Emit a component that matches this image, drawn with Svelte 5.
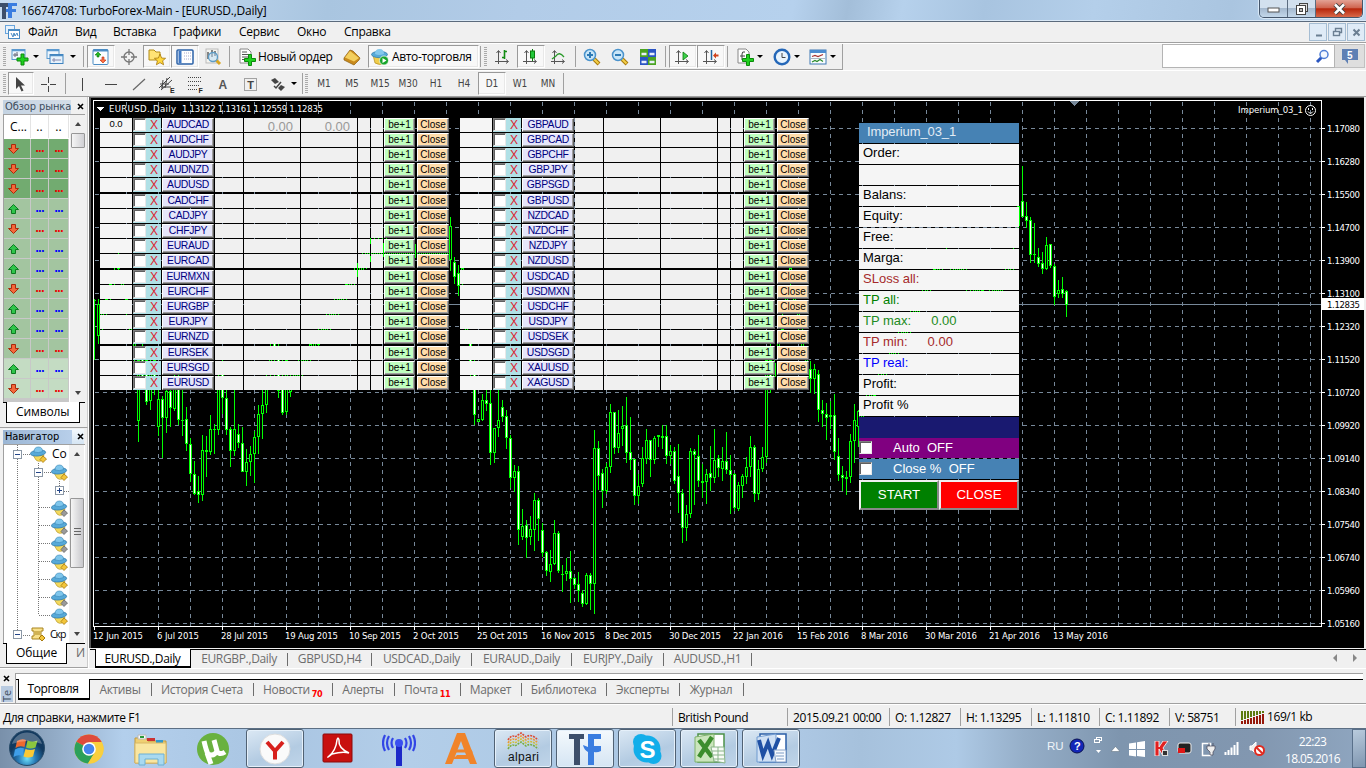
<script lang="ts">
  type Candle = [number, number, number, number, number, number];
  type Tool = { k: string; w: number; on?: boolean; t?: string };

  const menu: [string, number][] = [
    ['Файл', 47], ['Вид', 38], ['Вставка', 60], ['Графики', 66], ['Сервис', 58], ['Окно', 47], ['Справка', 60],
  ];

  const tools: Tool[] = [
    { k: 'grip', w: 8 }, { k: 'new', w: 23 }, { k: 'arr', w: 9 }, { k: 'profiles', w: 29 }, { k: 'arr', w: 7 },
    { k: 'gap', w: 3 }, { k: 'sep', w: 8 }, { k: 'market', w: 28, on: true }, { k: 'target', w: 28 },
    { k: 'star', w: 28, on: true }, { k: 'list', w: 28, on: true }, { k: 'tester', w: 28 }, { k: 'sep', w: 5 },
    { k: 'gap', w: 6 }, { k: 'order', w: 18 }, { k: 'text', w: 82, t: 'Новый ордер' }, { k: 'gold', w: 28 },
    { k: 'gap', w: 2 }, { k: 'auto', w: 111, on: true, t: 'Авто-торговля' }, { k: 'sep', w: 2 }, { k: 'grip', w: 8 },
    { k: 'bars', w: 28 }, { k: 'candle', w: 28, on: true }, { k: 'line', w: 28 }, { k: 'sep', w: 5 },
    { k: 'zoomin', w: 28 }, { k: 'zoomout', w: 28 }, { k: 'tile', w: 28 }, { k: 'sep', w: 7 },
    { k: 'scroll', w: 28, on: true }, { k: 'shift', w: 28, on: true }, { k: 'sep', w: 5 }, { k: 'gap', w: 4 },
    { k: 'indicator', w: 22 }, { k: 'arr', w: 7 }, { k: 'gap', w: 7 }, { k: 'clock', w: 23 }, { k: 'arr', w: 7 },
    { k: 'gap', w: 7 }, { k: 'template', w: 22 }, { k: 'arr', w: 8 }, { k: 'gap', w: 5 },
  ];

  const drawTools: Tool[] = [
    { k: 'grip', w: 8 }, { k: 'cursor', w: 26, on: true }, { k: 'cross', w: 29 }, { k: 'sep', w: 5 },
    { k: 'vline', w: 29 }, { k: 'hline', w: 28 }, { k: 'diag', w: 28 }, { k: 'channel', w: 28 }, { k: 'fibo', w: 28 },
    { k: 'letter', w: 28 }, { k: 'label', w: 28 }, { k: 'arrows', w: 25 }, { k: 'arr', w: 7 }, { k: 'gap', w: 4 },
    { k: 'sep', w: 2 }, { k: 'grip', w: 7 },
    ...['M1', 'M5', 'M15', 'M30', 'H1', 'H4', 'D1', 'W1', 'MN'].map((t) => ({ k: 'period', w: 28, t, on: t === 'D1' })),
    { k: 'sep', w: 3 },
  ];

  // 1 = price went up, 0 = price went down
  const market = [0, 0, 0, 1, 0, 1, 1, 0, 1, 1, 0, 1, 0];
  const navIcons = ['grey', 'grey', 'grey', 'yellow', 'yellow', 'grey', 'yellow'];

  const leftPairs = 'AUDCAD AUDCHF AUDJPY AUDNZD AUDUSD CADCHF CADJPY CHFJPY EURAUD EURCAD EURMXN EURCHF EURGBP EURJPY EURNZD EURSEK EURSGD EURUSD'.split(' ');
  const rightPairs = 'GBPAUD GBPCAD GBPCHF GBPJPY GBPSGD GBPUSD NZDCAD NZDCHF NZDJPY NZDUSD USDCAD USDMXN USDCHF USDJPY USDSEK USDSGD XAUUSD XAGUSD'.split(' ');

  const panelRows = [
    ['Order:', ''], ['', ''], ['Balans:', ''], ['Equity:', ''], ['Free:', ''], ['Marga:', ''],
    ['SLoss all:', 'brown'], ['TP all:', 'green'], ['TP max:', 'forest', '0.00'], ['TP min:', 'brown', '0.00'],
    ['TP real:', 'blue'], ['Profit:', ''], ['Profit %', ''],
  ];

  const prices = ['1.17080', '1.16280', '1.15500', '1.14700', '1.13900', '1.13100', '1.12320', '1.11520', '1.10720', '1.09920', '1.09140', '1.08340', '1.07540', '1.06740', '1.05960', '1.05160'];
  const dates: [string, number][] = [
    ['12 Jun 2015', 50], ['6 Jul 2015', 42], ['28 Jul 2015', 47], ['19 Aug 2015', 53], ['10 Sep 2015', 52], ['2 Oct 2015', 46],
    ['25 Oct 2015', 51], ['16 Nov 2015', 54], ['8 Dec 2015', 47], ['30 Dec 2015', 52], ['22 Jan 2016', 50], ['15 Feb 2016', 52],
    ['8 Mar 2016', 47], ['30 Mar 2016', 52], ['21 Apr 2016', 51], ['13 May 2016', 55],
  ];

  // x, high, low, body top, body bottom, up
  const bars: Candle[] = [
    [94, 299, 360, 300, 301, 1], [98, 299, 344, 304, 336, 1], [138, 350, 442, 360, 421, 1], [142, 340, 388, 350, 380, 0],
    [146, 350, 405, 360, 402, 0], [150, 350, 410, 370, 401, 1], [154, 350, 395, 360, 380, 0], [158, 380, 436, 399, 427, 1],
    [162, 396, 458, 399, 418, 0], [166, 388, 433, 391, 418, 1], [170, 380, 427, 391, 408, 0], [174, 370, 411, 380, 409, 1],
    [178, 370, 425, 380, 420, 0], [182, 388, 436, 420, 421, 0], [186, 407, 451, 419, 444, 0], [190, 438, 482, 444, 474, 0],
    [194, 461, 495, 474, 494, 0], [198, 476, 503, 491, 495, 0], [202, 435, 501, 450, 495, 1], [206, 436, 477, 450, 452, 0],
    [210, 415, 455, 429, 452, 1], [214, 424, 454, 429, 430, 0], [218, 370, 435, 380, 430, 1], [222, 360, 414, 370, 398, 0],
    [226, 390, 435, 398, 430, 0], [230, 427, 467, 429, 451, 0], [234, 386, 456, 429, 451, 1], [238, 424, 448, 434, 443, 0],
    [242, 427, 472, 443, 472, 0], [246, 449, 486, 462, 472, 1], [250, 446, 476, 454, 462, 1], [254, 431, 483, 437, 454, 1],
    [258, 405, 454, 414, 437, 1], [262, 386, 439, 405, 414, 1], [266, 370, 413, 380, 405, 1], [270, 340, 386, 350, 370, 1],
    [274, 330, 386, 340, 360, 0], [278, 340, 398, 350, 391, 0], [282, 360, 415, 380, 413, 0], [286, 350, 415, 360, 412, 1],
    [450, 217, 271, 226, 260, 1], [454, 257, 284, 262, 277, 0], [458, 265, 296, 273, 286, 0],
    [470, 330, 386, 340, 370, 0], [474, 350, 425, 370, 415, 0], [478, 419, 422, 419, 422, 1], [482, 394, 421, 400, 420, 1],
    [486, 380, 411, 400, 404, 0], [490, 380, 465, 403, 453, 0], [494, 428, 463, 428, 453, 1], [498, 380, 437, 420, 428, 1],
    [502, 400, 422, 407, 417, 0], [506, 410, 449, 416, 438, 0], [510, 435, 488, 438, 478, 0], [514, 465, 492, 471, 478, 1],
    [518, 466, 545, 471, 530, 0], [522, 509, 540, 526, 537, 1], [526, 520, 558, 525, 538, 0], [530, 516, 545, 529, 537, 1],
    [534, 493, 551, 500, 530, 1], [538, 498, 541, 500, 519, 0], [542, 523, 557, 530, 553, 0], [546, 551, 576, 552, 571, 0],
    [550, 550, 582, 564, 572, 1], [554, 520, 565, 533, 564, 1], [558, 531, 573, 533, 571, 0], [562, 565, 592, 574, 575, 0],
    [566, 558, 581, 571, 574, 1], [570, 551, 603, 571, 579, 0], [574, 577, 589, 578, 585, 0], [578, 572, 602, 584, 591, 0],
    [582, 590, 607, 593, 604, 0], [586, 573, 605, 575, 604, 1], [590, 573, 610, 575, 584, 0], [594, 430, 614, 448, 584, 1],
    [598, 441, 490, 448, 476, 0], [602, 469, 508, 473, 491, 0], [606, 463, 494, 467, 491, 1], [610, 404, 473, 412, 467, 1],
    [614, 412, 454, 412, 448, 0], [618, 410, 453, 433, 448, 1], [622, 406, 446, 426, 429, 1], [626, 397, 463, 425, 453, 0],
    [630, 417, 470, 452, 460, 0], [634, 459, 505, 459, 496, 0], [638, 474, 504, 486, 496, 1], [642, 447, 487, 458, 484, 1],
    [646, 429, 464, 440, 459, 1], [650, 440, 477, 440, 460, 0], [654, 436, 464, 438, 460, 1], [658, 435, 447, 435, 437, 0],
    [662, 425, 449, 436, 438, 1], [666, 425, 464, 436, 456, 0], [670, 445, 464, 451, 456, 1], [674, 447, 484, 451, 481, 0],
    [678, 444, 513, 476, 493, 0], [682, 489, 543, 493, 528, 0], [686, 505, 541, 514, 528, 1], [690, 448, 518, 451, 514, 1],
    [694, 449, 505, 451, 455, 0], [698, 435, 487, 456, 481, 0], [702, 464, 498, 481, 483, 0], [706, 469, 504, 474, 482, 1],
    [710, 446, 491, 473, 478, 0], [714, 429, 483, 460, 478, 1], [718, 455, 477, 458, 468, 0], [722, 447, 481, 461, 469, 1],
    [726, 432, 474, 461, 470, 0], [730, 455, 514, 470, 475, 0], [734, 473, 511, 474, 508, 0], [738, 482, 511, 485, 509, 1],
    [742, 474, 498, 476, 486, 1], [746, 457, 484, 467, 477, 1], [750, 436, 477, 447, 467, 1], [754, 445, 502, 447, 494, 0],
    [758, 460, 500, 469, 494, 1], [762, 447, 472, 457, 469, 1], [766, 350, 463, 360, 457, 1], [770, 340, 393, 360, 386, 0],
    [810, 361, 393, 369, 379, 0], [814, 364, 394, 369, 379, 1], [818, 370, 422, 374, 410, 0], [822, 400, 427, 410, 414, 0],
    [826, 403, 440, 414, 418, 0], [830, 401, 429, 415, 417, 1], [834, 394, 460, 415, 452, 0], [838, 438, 481, 456, 475, 0],
    [842, 466, 491, 475, 478, 0], [846, 471, 495, 477, 479, 0], [850, 434, 483, 441, 477, 1], [854, 404, 463, 420, 441, 1],
    [858, 410, 447, 411, 427, 1], [1018, 206, 232, 206, 226, 1], [1022, 166, 217, 201, 217, 0], [1026, 202, 228, 216, 221, 0],
    [1030, 217, 263, 220, 255, 0], [1034, 223, 263, 254, 255, 0], [1038, 248, 267, 257, 264, 0], [1042, 252, 274, 263, 269, 0],
    [1046, 237, 270, 245, 269, 1], [1050, 244, 268, 244, 266, 0], [1054, 264, 305, 266, 297, 0], [1058, 280, 298, 290, 294, 1],
    [1062, 277, 298, 289, 294, 0], [1066, 290, 317, 291, 305, 0],
  ];

  // stretches of history that mostly sit under the expert's tables
  const spans = [
    [102, 320, 118, 262, 134, 350],
    [290, 385, 370, 250, 446, 252],
    [462, 275, 464, 300, 466, 330],
    [774, 370, 790, 275, 806, 362],
    [862, 412, 945, 255, 985, 300],
    [989, 298, 1002, 285, 1014, 255],
  ];
  const covered: Candle[] = spans.flatMap(([x0, y0, x1, y1, x2, y2]) => {
    const out: Candle[] = [];
    for (let x = x0; x <= x2; x += 4) {
      const mid = Math.round(x < x1 ? y0 + ((y1 - y0) * (x - x0)) / (x1 - x0) : y1 + ((y2 - y1) * (x - x1)) / (x2 - x1));
      out.push([x, mid - 12, mid + 12, mid - 7, mid + 7, (x / 2) % 2]);
    }
    return out;
  });
  const candles = [...bars, ...covered];

  const vlines = Array.from({ length: 38 }, (_, i) => 126 + i * 32).filter((x) => x < 1321);
  const chartTabs: [string, number][] = [
    ['EURUSD.,Daily', 96], ['EURGBP.,Daily', 97], ['GBPUSD,H4', 84], ['USDCAD.,Daily', 100], ['EURAUD.,Daily', 100], ['EURJPY.,Daily', 92], ['AUDUSD.,H1', 88],
  ];
  const termTabs: [string, number, string?][] = [
    ['Торговля', 72], ['Активы', 62], ['История Счета', 102], ['Новости', 79, '70'], ['Алерты', 62], ['Почта', 66, '11'],
    ['Маркет', 61], ['Библиотека', 85], ['Эксперты', 73], ['Журнал', 64],
  ];
  const status: [string, number][] = [
    ['British Pound', 115], ['2015.09.21 00:00', 102], ['O: 1.12827', 71], ['H: 1.13295', 71], ['L: 1.11810', 68], ['C: 1.11892', 70], ['V: 58751', 66],
  ];
  const tasks: [string, string][] = [
    ['chrome', ''], ['explorer', ''], ['utorrent', ''], ['yandex', 'open'], ['acrobat', ''], ['podcast', ''], ['aimp', ''],
    ['alpari', 'open'], ['tf', 'open active'], ['skype', 'open'], ['excel', 'open'], ['word', 'open'],
  ];
</script>

{#snippet axes()}
  <path d="M4.500 3v13M1 13.500h13M2.500 5l2-2.500 2 2.500M12 11.500l2.500 2-2.500 2" fill="none" stroke="#555" />
{/snippet}

{#snippet plus(x: number, y: number)}
  <path d="M{x + 4} {y}h3v4h4v3h-4v4h-3v-4h-4v-3h4z" fill="#1fd01f" stroke="#0a8a0a" />
{/snippet}

{#snippet glass(sign: string)}
  <path d="M11 11l5 5" stroke="#a8790c" stroke-width="4" /><path d="M11 11l4.500 4.500" stroke="#f3cf4a" stroke-width="2" />
  <circle cx="7" cy="7" r="5.500" fill="#c9e6f8" stroke="#4a93cc" stroke-width="1.500" />
  <path d={sign === '+' ? 'M4 7h6M7 4v6' : 'M4 7h6'} stroke="#2d7ab5" stroke-width="2" />
{/snippet}

{#snippet ufo(c: string)}
  <svg class="ufo" width="17" height="17" viewBox="0 0 17 17">
    <path d="M3 9l3 5q2 2 5 1l3-6z" fill="#f4d95c" stroke="#b99a2a" stroke-width=".7" />
    <ellipse cx="8" cy="7" rx="7.700" ry="3" fill="#56a9d8" stroke="#2f79a8" stroke-width=".7" transform="rotate(-6 8 7)" />
    <path d="M4 6q0-5 4.500-5 4 0 4 4.500-4 2-8.500.5z" fill="#7fc6ec" stroke="#3585b5" stroke-width=".6" />
    <path d="M13 10l3.500 3-3.500 3.500-3-3z" fill={c === 'grey' ? '#9a9a9a' : '#f2c53a'} stroke={c === 'grey' ? '#666' : '#a8790c'} stroke-width=".8" />
  </svg>
{/snippet}

{#snippet icon(k: string)}
  <svg class="ico" width="18" height="18" viewBox="0 0 18 18">
    {#if k === 'new'}
      <rect x="1" y="1.500" width="13" height="10" fill="#eef6fd" stroke="#5c9bd0" /><path d="M1 2.500h13" stroke="#5c9bd0" stroke-width="1.500" />
      <path d="M4 5v4M6 4v4M2 7h5" stroke="#667" />{@render plus(6, 6)}
    {:else if k === 'profiles'}
      <rect x="1" y="1.500" width="12" height="9" fill="#eef6fd" stroke="#5c9bd0" /><path d="M1 2.500h12" stroke="#5c9bd0" stroke-width="1.500" />
      <rect x="4" y="6.500" width="13" height="9" fill="#e6f2fc" stroke="#3f83bf" /><path d="M4 7.500h13" stroke="#4b8cc4" stroke-width="1.500" /><path d="M6 12h9M8 10v4" stroke="#88a" />
    {:else if k === 'market'}
      <rect x="1" y="1.500" width="15" height="15" rx="1" fill="#fafdff" stroke="#4b8cc4" /><path d="M1 2.500h15" stroke="#4b8cc4" stroke-width="2" />
      <path d="M6 4l3 3h-2v2h-2v-2h-2z" fill="#22b822" stroke="#0b7a0b" stroke-width=".6" /><path d="M11 15l3-3h-2v-3h-2v3h-2z" fill="#ff7043" stroke="#b52a08" stroke-width=".6" />
    {:else if k === 'target'}
      <circle cx="9" cy="9" r="5" fill="none" stroke="#777" stroke-width="1.300" /><path d="M9 1v6M9 11v6M1 9h6M11 9h6" stroke="#777" stroke-width="1.300" />
    {:else if k === 'star'}
      <path d="M1 2h5l2 2h4v8H1z" fill="#ffe375" stroke="#b28b17" /><path d="M12 6l1.600 4 4 .3-3 2.500 1 4-3.600-2.200-3.600 2.200 1-4-3-2.500 4-.3z" fill="#ffd83d" stroke="#a8790c" stroke-width=".8" />
    {:else if k === 'list'}
      <rect x="1" y="2" width="16" height="14" rx="1" fill="#fff" stroke="#2b62a8" stroke-width="1.500" /><path d="M4 3v12" stroke="#3f78c4" stroke-width="3" /><path d="M8 5h7M8 8h7M8 11h7" stroke="#aac" stroke-dasharray="1 1" />
    {:else if k === 'tester'}
      <rect x="2" y="1" width="12" height="14" fill="#f4f4f0" stroke="#bbb" /><path d="M4 11V4M8 9V2M11 8V3" stroke="#555" stroke-width="1.400" />
      <path d="M12 12l4 4" stroke="#d8a520" stroke-width="3" /><circle cx="9" cy="9" r="4.500" fill="#bfe0f588" stroke="#5c9bc6" stroke-width="1.300" />
    {:else if k === 'order'}
      <path d="M2 1h8l3 3v11H2z" fill="#fff" stroke="#888" /><path d="M4 4h5M4 6.500h7M4 9h6M4 11.500h5" stroke="#555" />{@render plus(6.5, 6.5)}
    {:else if k === 'gold'}
      <path d="M1 10l6-8 3 1 7 7-1 2-5 5-10-5z" fill="#c98a1c" stroke="#8b5e10" stroke-width=".7" /><path d="M2 9.500l5-6.500 9 7-5 3.500z" fill="#f3cf5e" />
    {:else if k === 'auto'}
      <path d="M2 7l2 8q5 3 9 0l2-8z" fill="#f0cd4c" stroke="#b08c20" stroke-width=".7" /><ellipse cx="8.500" cy="6.500" rx="8" ry="3.200" fill="#56a9d8" stroke="#2f79a8" stroke-width=".7" />
      <path d="M4 6q0-5 4.500-5t4.500 5q-5 2-9 0z" fill="#84c8ec" /><circle cx="13" cy="12.500" r="4.500" fill="#17a52b" stroke="#fff" stroke-width=".7" /><path d="M11.500 10l4 2.500-4 2.500z" fill="#fff" />
    {:else if k === 'bars'}
      {@render axes()}<path d="M10.500 2v9M8 9.500h2.500M10.500 3.500H13" stroke="#118c11" stroke-width="1.600" fill="none" />
    {:else if k === 'candle'}
      {@render axes()}<path d="M10.500 1v12" stroke="#0a7a0a" /><rect x="8.500" y="3" width="4" height="7" fill="#22c83a" stroke="#0a7a0a" />
    {:else if k === 'line'}
      {@render axes()}<path d="M2 11l4-3q3-5 8 1" stroke="#2a9a2a" stroke-width="1.300" fill="none" />
    {:else if k === 'zoomin'}
      {@render glass('+')}
    {:else if k === 'zoomout'}
      {@render glass('-')}
    {:else if k === 'tile'}
      <rect x="1" y="1" width="8" height="8" fill="#4aa321" /><rect x="9" y="1" width="8" height="8" fill="#2a54c4" /><rect x="1" y="9" width="8" height="8" fill="#2a54c4" /><rect x="9" y="9" width="8" height="8" fill="#4aa321" />
      <path d="M2.500 6h5M10.500 6h5M2.500 14h5M10.500 14h5" stroke="#e8eefa" stroke-width="2.500" />
    {:else if k === 'scroll'}
      {@render axes()}<path d="M9 4l5 4-5 4z" fill="#3bd14a" stroke="#0a7a0a" stroke-width=".8" />
    {:else if k === 'shift'}
      {@render axes()}<path d="M9.500 2v10" stroke="#2265a0" stroke-width="1.500" /><path d="M11 7.500l3-3v2h2.500v2H14v2z" fill="#d0421b" />
    {:else if k === 'indicator'}
      <path d="M2 1h8l3 3v11H2z" fill="#fdfdfd" stroke="#888" /><path d="M9 4q-3-1-3 2v6M4 8h5" stroke="#444" fill="none" />{@render plus(6.5, 6.5)}
    {:else if k === 'clock'}
      <circle cx="9" cy="9" r="7.300" fill="#e9f4fd" stroke="#2467b8" stroke-width="2.400" /><path d="M9 5v4.500h3.500" stroke="#444" fill="none" />
    {:else if k === 'template'}
      <rect x="1" y="2" width="16" height="14" fill="#fafdff" stroke="#3f78b4" /><path d="M1 3.500h16" stroke="#4b8cd0" stroke-width="3" /><path d="M3 8.500l3-1 3 1 5-2" stroke="#a33" fill="none" stroke-width="1.200" /><path d="M2 10.500h14" stroke="#789" stroke-width=".6" /><path d="M3 14l3-1.500 2 1 3-2 3 2" stroke="#2a8a2a" fill="none" stroke-width="1.200" />
    {:else if k === 'cursor'}
      <path d="M4 2v12l3-3 2.500 5.500 2-1-2.500-5h4z" fill="#444" />
    {:else if k === 'cross'}
      <path d="M8.500 2v6M8.500 11v6M1 9.500h6M10 9.500h6" stroke="#444" />
    {:else if k === 'vline'}
      <path d="M8.500 3v13" stroke="#444" />
    {:else if k === 'hline'}
      <path d="M3 9.500h12" stroke="#444" />
    {:else if k === 'diag'}
      <path d="M3 15L15 4" stroke="#666" stroke-width="1.200" />
    {:else if k === 'channel'}
      <path d="M1 13L12 2M3 15L14 5M2 9h9M3 12h10M5 5l-1 9M9 3l-2 10" stroke="#444" /><text x="12" y="17.500" font-size="7" font-weight="700" fill="#222">E</text>
    {:else if k === 'fibo'}
      <path d="M2 2.500h14M2 6.500h14M2 10.500h12M2 14.500h9" stroke="#444" stroke-dasharray="1 1" /><text x="12.500" y="17.500" font-size="7" font-weight="700" fill="#222">F</text>
    {:else if k === 'letter'}
      <text x="4.500" y="14" font-size="12" font-weight="700" fill="#555">A</text>
    {:else if k === 'label'}
      <rect x="2.500" y="3.500" width="12" height="12" fill="none" stroke="#555" stroke-dasharray="1 1" /><text x="5.200" y="14" font-size="11" font-weight="700" fill="#444">T</text>
    {:else if k === 'arrows'}
      <path d="M6 3l4 4-4 2-4-4zM12 10l4 2-4 4-3-3z" fill="#444" /><path d="M5 11l2 2 5-6" stroke="#444" fill="none" stroke-width="1.500" />
    {/if}
  </svg>
{/snippet}

{#snippet strip(items: Tool[])}
  {#each items as t}
    <div class="tool {t.k}" class:on={t.on} style="width:{t.w}px">
      {#if t.k === 'grip' || t.k === 'sep' || t.k === 'arr'}
        <i class="{t.k}-mark"></i>
      {:else if t.k === 'period' || t.k === 'text'}
        <span>{t.t}</span>
      {:else if t.k !== 'gap'}
        {@render icon(t.k)}{#if t.t}<span>{t.t}</span>{/if}
      {/if}
    </div>
  {/each}
{/snippet}

{#snippet quotes(pairs: string[], side: string)}
  <div class="quotes {side}">
    {#each pairs as p, i}
      <div class="qrow" class:extra={i > 0 && i % 5 === 0}>
        <span class="c first">{side === 'one' && i === 0 ? '0.0' : ''}</span>
        <span class="chk"><i class="box"></i><b>X</b></span>
        <button class="pair">{p}</button>
        <span class="c"></span>
        <span class="c sum">{side === 'one' && i === 0 ? '0.00' : ''}</span>
        <span class="c sum">{side === 'one' && i === 0 ? '0.00' : ''}</span>
        <span class="c"></span>
        <span class="c"></span>
        <button class="be">be+1</button>
        <button class="cl">Close</button>
      </div>
    {/each}
  </div>
{/snippet}

<div class="app">
  <header class="title">
    <svg width="17" height="17" viewBox="0 0 17 17"><path d="M0 1h8v4H6v12H2V5H0z" fill="#3d4f6b" /><path d="M8 1h9v3h-5v3h4v3h-4v6H8v-6H6V7h2z" fill="#3a7de0" /></svg>
    <span>16674708: TurboForex-Main - [EURUSD.,Daily]</span>
    <div class="winbtns">
      <i><svg width="13" height="6"><rect x="1" y="1" width="11" height="4" fill="#fff" stroke="#555" /></svg></i>
      <i><svg width="12" height="12"><rect x="3.500" y=".5" width="8" height="8" fill="#ddd" stroke="#444" /><rect x=".5" y="2.500" width="9" height="9" fill="#fff" stroke="#444" /><rect x="3.500" y="5.500" width="3" height="3" fill="#bbb" stroke="#444" /></svg></i>
      <i class="x"><svg width="13" height="12"><path d="M2 1.500l9 9M11 1.500l-9 9" stroke="#444" stroke-width="4.500" /><path d="M2 1.500l9 9M11 1.500l-9 9" stroke="#fff" stroke-width="2.500" /></svg></i>
    </div>
  </header>

  <nav class="menu">
    <svg width="16" height="15" viewBox="0 0 16 15"><rect x=".5" y=".5" width="9" height="8" fill="#e8f2fc" stroke="#69a5dc" /><rect x="3.500" y="4.500" width="11" height="9" fill="#fff" stroke="#4b8cc4" /><path d="M4 5h11" stroke="#4b8cc4" stroke-width="2" /><path d="M6 8l2 4 1-4 1 3 2-3 1 3" stroke="#4b8cc4" fill="none" /></svg>
    <div class="items">
      {#each menu as [m, w]}<span style="width:{w}px">{m}</span>{/each}
    </div>
    <div class="mdi">
      <i><svg width="11" height="11"><path d="M3 8.500h6" stroke="#6b7f93" stroke-width="2" /></svg></i>
      <i><svg width="11" height="11"><path d="M3.500 4V1.500h6v4H8" stroke="#6b7f93" fill="none" stroke-width="1.400" /><rect x="1.500" y="4.500" width="6" height="4" fill="none" stroke="#6b7f93" stroke-width="1.400" /></svg></i>
      <i><svg width="11" height="11"><path d="M2.500 2.500l6 6M8.500 2.500l-6 6" stroke="#6b7f93" stroke-width="2" /></svg></i>
    </div>
  </nav>

  <div class="bar one">
    <div class="tools">{@render strip(tools)}</div>
    <div class="search">
      <svg width="15" height="15"><path d="M2 13l5-5" stroke="#2a56c0" stroke-width="3" /><circle cx="9" cy="5.500" r="4" fill="#f2f7ff" stroke="#4f7ed6" stroke-width="1.500" /></svg>
    </div>
    <div class="msgs"><svg width="18" height="17"><path d="M1 1h16v11H7v4l-3-4H1z" fill="#5f80b4" /><text x="6" y="10.500" font-size="10" font-weight="700" fill="#fff">5</text></svg></div>
  </div>

  <div class="bar two">
    <div class="tools">{@render strip(drawTools)}</div>
  </div>

  <main>
    <aside>
      <section class="mw">
        <h2><span>Обзор рынка</span><svg width="7" height="7"><path d="M1 1l5 5M6 1l-5 5" stroke="#000" stroke-width="1.600" /></svg></h2>
        <div class="frame">
          <div class="rows">
            <div class="mrow head"><span>С...</span><span>..</span><span>..</span></div>
            {#each market as up, i}
              <div class="mrow" class:hot={i < 3} class:soft={i > 10}>
                <span><svg width="11" height="10" viewBox="0 0 11 10">{#if up}<path d="M5.500.5l5 5h-3v4h-4v-4h-3z" fill="#2fc44a" stroke="#0c7a20" />{:else}<path d="M5.500 9.500l5-5h-3v-4h-4v4h-3z" fill="#f4683a" stroke="#a82a0c" />{/if}</svg></span>
                <span class:up>...</span><span class:up>...</span>
              </div>
            {/each}
          </div>
          <div class="sbar"><i class="t-up"></i><b class="thumb small"></b><i class="t-dn"></i></div>
        </div>
        <div class="ptabs"><b>Символы</b></div>
      </section>
      <section class="nav">
        <h2 class="active"><span>Навигатор</span><svg width="7" height="7"><path d="M1 1l5 5M6 1l-5 5" stroke="#000" stroke-width="1.600" /></svg></h2>
        <div class="frame">
          <div class="tree">
            <svg class="lines" width="66" height="198"><path d="M13.500 0v190M34.500 18v152M55.500 36v12M19 9.500h8M40 27.500h8M60 46.500h6M35 62.500h12M35 80.500h12M35 98.500h12M35 116.500h12M35 134.500h12M35 152.500h12M35 170.500h12M19 190.500h8" stroke="#777" stroke-dasharray="1 1" fill="none" /></svg>
            <div class="node l1"><i class="pm"></i>{@render ufo('yellow')}<span>Со</span></div>
            <div class="node l2"><i class="pm"></i>{@render ufo('yellow')}</div>
            <div class="node l3"><i class="pm plus"></i></div>
            {#each navIcons as c}<div class="node leaf">{@render ufo(c)}</div>{/each}
            <div class="node l1"><i class="pm"></i>
              <svg width="16" height="16"><path d="M2 2h11v3h-2v5h2v3H2v-3h2V5H2z" fill="#f8e08a" stroke="#a8841e" /><path d="M5 6h5M5 8h5" stroke="#a8841e" /><path d="M12 9l3 3-3 3-3-3z" fill="#f2c53a" stroke="#a8790c" /></svg>
              <span class="tight">Скр</span></div>
          </div>
          <div class="sbar"><i class="t-up"></i><b class="thumb big"></b><i class="t-dn"></i></div>
        </div>
        <div class="ptabs"><b>Общие</b><span>И</span></div>
      </section>
    </aside>

    <div class="work">
      <div class="chart">
        <svg class="plot" width="1273" height="550" viewBox="91 98 1273 550" shape-rendering="crispEdges">
          <g stroke="#778899" stroke-dasharray="4 4">
            {#each vlines as x}<path d="M{x + 0.5} 102V626" />{/each}
            {#each prices as _, i}<path d="M95 {128.5 + i * 33}H1321" />{/each}
          </g>
          <path d="M94 304.500H1321" stroke="#778899" />
          {#each candles as [x, hi, lo, top, bot, up]}
            <rect {x} y={hi} width="1" height={lo - hi} fill="#0f0" />
            <rect x={x - 1} y={top} width="3" height={Math.max(1, bot - top)} fill="#0f0" />
            {#if bot - top > 2}<rect {x} y={top + 1} width="1" height={bot - top - 2} fill={up ? '#000' : '#fff'} />{/if}
          {/each}
          <path d="M93.500 626.500V100.500H1321.500V626.500H93.500" fill="none" stroke="#fff" />
          <path d="M1070 101h9l-4.500 5z" fill="#778899" />
          <g class="lbl" fill="#fff">
            <path d="M97 107h7l-3.500 4z" />
            <text x="109" y="112" textLength="67">EURUSD.,Daily</text>
            <text x="182" y="112" textLength="141">1.13122 1.13161 1.12559 1.12835</text>
            <text x="1238" y="113" textLength="65">Imperium_03_1</text>
            {#each prices as p, i}
              <rect x="1322" y={128 + i * 33} width="3" height="1" />
              <text x="1327" y={132 + i * 33} textLength="33">{p}</text>
            {/each}
            {#each dates as [d, w], i}
              <rect x={94 + i * 64} y="627" width="1" height="3" />
              <text x={93 + i * 64} y="639" textLength={w}>{d}</text>
            {/each}
            <rect x="1322" y="298" width="42" height="12" />
            <text x="1327" y="308" textLength="33" fill="#000">1.12835</text>
          </g>
          <g fill="none" stroke="#fff" shape-rendering="auto"><circle cx="1310.500" cy="110.500" r="5" /><path d="M1308 111.500q2.500 3.500 5 0M1308.500 108v2M1312.500 108v2" /></g>
        </svg>
        {@render quotes(leftPairs, 'one')}
        {@render quotes(rightPairs, 'two')}
        <div class="panel">
          <div class="phead">Imperium_03_1</div>
          {#each panelRows as [name, color, val]}
            <div class="prow {color}"><span>{name}</span>{#if val}<em>{val}</em>{/if}</div>
          {/each}
          <div class="navy"></div>
          <div class="switch purple"><i class="box"></i><span>Auto&nbsp; OFF</span></div>
          <div class="switch steel"><i class="box"></i><span>Close %&nbsp; OFF</span></div>
          <div class="acts"><button class="go">START</button><button class="stop">CLOSE</button></div>
        </div>
      </div>
      <div class="ctabs">
        {#each chartTabs as [t, w], i}<span class:sel={i === 0} style="width:{w}px">{t}</span>{/each}
        <div class="nudge"><i></i><i></i></div>
      </div>
    </div>
  </main>

  <section class="terminal">
    <div class="tside"><svg width="7" height="7"><path d="M1 1l5 5M6 1l-5 5" stroke="#000" stroke-width="1.600" /></svg><span>Те</span></div>
    <div class="tbody">
      <div class="ttabs">
        {#each termTabs as [t, w, n], i}<span class:sel={i === 0} style="width:{w}px">{t}{#if n}<b>{n}</b>{/if}</span>{/each}
      </div>
    </div>
  </section>

  <footer class="status">
    <span class="help">Для справки, нажмите F1</span>
    {#each status as [s, w]}<span class="cell" style="width:{w}px">{s}</span>{/each}
    <span class="cell net">
      <svg width="24" height="14"><g stroke-width="2">{#each Array(8) as _, i}<path d="M{1 + i * 3} 1V{10 - i}" stroke="#5c7a10" /><path d="M{1 + i * 3} {11 - i}V14" stroke="#96180a" />{/each}</g></svg>169/1 kb</span>
  </footer>

  <div class="taskbar">
    <div class="start"><svg width="38" height="38" viewBox="0 0 38 38">
      <defs><radialGradient id="orb" cx=".5" cy=".8"><stop offset="0" stop-color="#6fe0fa" /><stop offset=".5" stop-color="#2779b5" /><stop offset="1" stop-color="#12395f" /></radialGradient></defs>
      <circle cx="19" cy="19" r="17.500" fill="url(#orb)" stroke="#274a68" />
      <path d="M9 12q5-3 9-1l-1.500 7q-5-2-9 1z" fill="#ee6a2f" /><path d="M19.500 11.500q5 2 10 0l-2 7q-5 2-9.500 0z" fill="#8cc63e" /><path d="M7 20.500q4.500-3 9-1l-1.500 7.500q-4.500-2-9 1z" fill="#3f9ee8" /><path d="M17.500 20q4.500 2 9.500 0l-2 7.500q-5 2-9.500 0z" fill="#fbc934" />
      <path d="M4 15a15.500 15.500 0 0 1 30 0q-15-6-30 0z" fill="#ffffff44" />
    </svg></div>
    {#each tasks as [k, cls]}
      <div class="task"><div class="tb {cls}">
        <svg width="34" height="36" viewBox="0 0 34 36">
          {#if k === 'chrome'}
            <circle cx="17" cy="18" r="14.500" fill="#f7c933" /><path d="M17 18L4.400 10.800A14.500 14.500 0 0 1 29.600 10.800z" fill="#de4b3b" /><path d="M4.400 10.800A14.500 14.500 0 0 0 16 32.500L23 21z" fill="#2ca05a" /><path d="M17 11h12.700a14.500 14.500 0 0 1-13.700 21.500L23 21z" fill="#f9cf3e" /><circle cx="17" cy="18" r="6.800" fill="#fff" /><circle cx="17" cy="18" r="5.300" fill="#4585ee" />
          {:else if k === 'explorer'}
            <path d="M1 7h11l2 3h18v22H1z" fill="#efcf72" stroke="#c19a3d" /><path d="M4 4h8v4H4z" fill="#fafafa" stroke="#bbb" /><rect x="6" y="5" width="4" height="2" fill="#2a9a3a" /><rect x="13" y="7" width="8" height="3" fill="#c33" /><rect x="22" y="9" width="7" height="3" fill="#39c" /><path d="M1 12h31v20H1z" fill="#f9e6a1" stroke="#d9b866" /><path d="M5 34V23h25v11h-6v-6H11v6z" fill="#a9d9f0" stroke="#6cb0d4" />
          {:else if k === 'utorrent'}
            <circle cx="17" cy="18" r="16" fill="#69b13f" /><path d="M8 10q2 9 4 13 6 3 9-3L18 9M20 19q3 6 9 2M11 22l4 11" fill="none" stroke="#fff" stroke-width="5" />
          {:else if k === 'yandex'}
            <circle cx="17" cy="18" r="15" fill="#fafafa" stroke="#ddd" /><path d="M9 11l8 9 8-9M17 19v9.500" fill="none" stroke="#d7201c" stroke-width="4" />
          {:else if k === 'acrobat'}
            <rect x="3" y="3" width="29" height="28" rx="1" fill="#c8100f" stroke="#8b0b0a" /><path d="M8 26q8-6 9-17 1-4 2 0-1 8 10 13-6-2-17 1-5 4-4 3z" fill="none" stroke="#fff" stroke-width="1.500" />
          {:else if k === 'podcast'}
            <path d="M17 14v21" stroke="#1c28c8" stroke-width="6" /><circle cx="17" cy="12" r="4" fill="#3a50f0" /><g fill="none" stroke="#3346e6" stroke-width="2.200"><path d="M11 7q-3 5 0 10M7 5q-4 7 0 14M3 4q-4 8 0 16M23 7q3 5 0 10M27 5q4 7 0 14M31 4q4 8 0 16" /></g>
          {:else if k === 'aimp'}
            <path d="M13 2h8l12 31h-7l-2-5H9l4-4h9L17 10 8 33H1z" fill="#f0842a" /><path d="M12 18.500h15l2 3H10z" fill="#f0842a" />
          {:else if k === 'alpari'}
            <g fill="none" stroke-width="1.600" stroke-dasharray="2 1"><path d="M2 9q4-6 7-3l6-4 5 4q5-4 12 3" stroke="#dd4b33" /><path d="M2 12q4-6 7-3l6-4 5 4q5-4 12 3" stroke="#ec9832" /><path d="M2 15q4-6 7-3l6-4 5 4q5-4 12 3" stroke="#d0bc35" /><path d="M2 18q4-6 7-3l6-4 5 4q5-4 12 3" stroke="#78ad42" /></g><text x="2" y="30" font-size="12" textLength="31" fill="#111">alpari</text>
          {:else if k === 'tf'}
            <path d="M1 3h15v5h-4v26H6V8H1z" fill="#3d4f6b" /><path d="M20 3h13v5h-7v7h7v5q-4 2-7 1v13h-6V21q-4-2-5-7l5 2z" fill="#3a7de0" />
          {:else if k === 'skype'}
            <circle cx="17" cy="18" r="13.500" fill="#12aeea" /><circle cx="11" cy="11" r="8" fill="#12aeea" /><circle cx="23.500" cy="25" r="8" fill="#12aeea" /><text x="9.500" y="26.500" font-size="24" font-weight="700" fill="#fff">S</text>
          {:else if k === 'excel'}
            <path d="M6 3h26v28H6z" fill="#fff" stroke="#4c9148" stroke-width="1.500" /><path d="M3 6l19-3v28H3z" fill="#cbe5bd" stroke="#7fb26b" /><path d="M7 9l13 17M20 6L7 26" stroke="#3c8d2d" stroke-width="4.500" /><path d="M19 16h13l1 16-11-2z" fill="#f8fbf6" stroke="#8ab58a" /><path d="M20 20h12M21 24h12M22 28h10M26 16v14" stroke="#8ab58a" />
          {:else}
            <path d="M6 3h26v28H6z" fill="#fff" stroke="#2b5fa8" stroke-width="1.500" /><path d="M3 6l19-3v28H3z" fill="#cfe0f4" stroke="#6f9ad0" /><path d="M5 9l4 15 5-12 4 12L25 7" fill="none" stroke="#1f50a4" stroke-width="4" /><path d="M20 19h12v12H22z" fill="#f8fbff" stroke="#8aa5c8" /><path d="M22 22h8M22 25h8M23 28h7" stroke="#7d9cc4" />
          {/if}
        </svg>
      </div></div>
    {/each}
    <div class="tray">
      <span class="lang">RU</span>
      <svg class="q" width="16" height="16"><circle cx="8" cy="8" r="7" fill="#1226b8" stroke="#0a1250" /><text x="5" y="12" font-size="11" font-weight="700" fill="#fff">?</text></svg>
      <svg class="lift" width="9" height="17"><rect x="2.500" y=".5" width="5" height="3" fill="none" stroke="#fff" /><rect x=".5" y="2.500" width="5" height="3" fill="#8a9cb0" stroke="#fff" /><path d="M2 13h5l-2.500 3z" fill="#fff" /></svg>
      <svg width="9" height="6"><path d="M0 5.500L4.500.5 9 5.500z" fill="#fff" stroke="#567" stroke-width=".5" /></svg>
      <svg width="16" height="16"><path d="M0 2.500l7-1V8H0zM8 1.300L16 0v8H8zM0 9h7v6.500l-7-1zM8 9h8v7l-8-1z" fill="#fff" /></svg>
      <svg width="15" height="15"><path d="M1 0h4v6l4-6h5L9 7l5 8H9L5 8v7H1z" fill="#e02020" stroke="#fff" stroke-width=".8" /><rect x="8.500" y="9.500" width="5" height="5" fill="#333" stroke="#ddd" /></svg>
      <svg width="15" height="13"><rect x="1" y="1" width="13" height="10" rx="2" fill="#222" stroke="#eee" /><rect x="1" y="6" width="7" height="5" fill="#e01818" /></svg>
      <svg width="15" height="16"><rect x="1.500" y="2.500" width="8" height="12" fill="none" stroke="#fff" stroke-width="1.500" /><path d="M6 5h8v3l-2 3v3H9v-3L6 8zM8 2v3M12 2v3" fill="#eee" stroke="#445" stroke-width=".7" /></svg>
      <svg width="16" height="13"><path d="M1.500 13v-3M4.500 13V8M7.500 13V5.500M10.500 13V3M13.500 13V0" stroke="#fff" stroke-width="2" /></svg>
      <svg width="16" height="15"><path d="M1 5h2l4-4v12l-4-4H1z" fill="#eee" stroke="#fff" /><circle cx="10.500" cy="9.500" r="4.500" fill="#fff" stroke="#e02b20" stroke-width="2" /><path d="M7.500 6.500l6 6" stroke="#e02b20" stroke-width="2" /></svg>
    </div>
    <div class="time"><span>22:23</span><span>18.05.2016</span></div>
    <div class="peek"></div>
  </div>
</div>

<style>
  :global(body) { margin: 0; overflow: hidden; }
  .app {
    width: 1366px; height: 768px; display: flex; flex-direction: column; overflow: hidden;
    background: #f0f0f0; color: #000; font: 12px/1 'Open Sans', 'Noto Sans', sans-serif;
    --ui: 'Open Sans', 'Noto Sans', sans-serif;
    --tahoma: 'DejaVu Sans Condensed', 'DejaVu Sans', sans-serif;
    --arial: 'Liberation Sans', Arial, sans-serif;
  }
  .app *, .app *::before { box-sizing: border-box; }
  svg { display: block; flex: none; }
  svg text { font-family: var(--arial); }
  i { font-style: normal; }
  button { padding: 0; margin: 0; font: inherit; }

  .title {
    height: 22px; display: flex; align-items: flex-start; padding-top: 2px; border-bottom: 1px solid #5b6a7c; box-shadow: inset 0 -1px #d9e8f6;
    background: linear-gradient(100deg, #c7dcf0 0, #bcd4ec 14%, #a9c5e0 24%, #b2cce8 38%, #b6d1ed 58%, #a3bed9 62%, #b6d1ec 66%, #a8c4e0 72%, #b4cfea 80%, #aac5e0 90%, #c0d8f0);
  }
  .title > span { margin: 3px 0 0 4px; font-size: 12px; letter-spacing: -.25px; white-space: nowrap; }
  .winbtns { display: flex; margin: -2px 3px 0 auto; height: 18px; border: 1px solid #45566b; border-top: 0; border-radius: 0 0 5px 5px; overflow: hidden; box-shadow: 0 0 1px 1px #ddecf9; }
  .winbtns i { display: flex; width: 28px; align-items: center; justify-content: center; border-right: 1px solid #5b6c80; background: linear-gradient(#d2e0ee 0 45%, #a5b9cf 50%, #c3d7ea); }
  .winbtns i:first-child { padding-top: 3px; }
  .winbtns .x { width: 46px; border: 0; background: linear-gradient(#e3a295 0, #d06651 45%, #b7270d 52%, #d8694a); }

  .menu { height: 21px; display: flex; align-items: center; padding-left: 5px; border-bottom: 1px solid #a0a0a0; }
  .items { display: flex; margin-left: 7px; }
  .items span { letter-spacing: -.3px; white-space: nowrap; }
  .mdi { display: flex; gap: 1px; margin-left: auto; padding-right: 1px; }
  .mdi i { width: 18px; height: 18px; display: grid; place-items: center; background: #dfebf7; border: 1px solid #a5bdd3; }

  .bar { display: flex; border-top: 1px solid #fff; }
  .bar.one { height: 27px; }
  .bar.two { height: 27px; border-bottom: 1px solid #a0a0a0; }
  .tools { display: flex; height: 26px; border-right: 1px solid #a0a0a0; border-bottom: 1px solid #a0a0a0; }
  .two .tools { border: 0; height: 25px; }
  .tool { display: flex; align-items: center; justify-content: center; flex: none; height: 25px; white-space: nowrap; }
  .tool.on { background: #f8f8f8; background-clip: padding-box; border: 1px solid #fff; border-left-color: #999; border-top-color: #999; height: 23px; margin-top: 1px; box-shadow: inset -1px -1px #e8e8e8; }
  .tool span { letter-spacing: -.36px; }
  .tool.text { justify-content: flex-start; padding-left: 2px; }
  .tool.auto { justify-content: flex-start; padding-left: 2px; gap: 3px; }
  .tool.period { font: 10px var(--tahoma); color: #444; }
  .tool.period span { letter-spacing: 0; }
  .grip-mark { width: 3px; height: 20px; background: repeating-linear-gradient(#aaa 0 1px, #f0f0f0 1px 2px); }
  .sep-mark { width: 1px; height: 21px; background: #a0a0a0; }
  .arr-mark { border: 3px solid transparent; border-top-color: #000; border-bottom: 0; }
  .search { width: 173px; height: 24px; margin-left: auto; background: #fff; border: 1px solid #b4b4b4; display: flex; justify-content: flex-end; align-items: center; padding-right: 4px; }
  .msgs { width: 30px; height: 24px; margin-right: 1px; border: 1px solid #c0c0c0; border-left: 0; background: #dedede; display: grid; place-items: center; }

  main { height: 571px; display: flex; }
  aside { width: 89px; border-right: 1px solid #fff; display: flex; flex-direction: column; }
  aside section { padding: 2px 0 0 3px; border-bottom: 1px solid #a0a0a0; border-right: 1px solid #ccc; }
  .mw { height: 331px; }
  .nav { height: 240px; padding-top: 1px; }
  h2 { margin: 0; height: 15px; font: 11px/13px var(--tahoma); display: flex; align-items: center; width: 81px; justify-content: space-between; white-space: nowrap; }
  h2 span { width: 68px; overflow: hidden; height: 14px; color: #3c4c5c; background: linear-gradient(90deg, #c4d3e2, #d4dde8); padding-left: 2px; letter-spacing: -.1px; }
  h2.active span { color: #000; width: 69px; background: linear-gradient(90deg, #9bb6d4, #b8cfea); }
  .frame { display: flex; width: 82px; border-left: 1px solid #a0a0a0; border-top: 1px solid #a0a0a0; background: #fff; overflow: hidden; }
  .mw .frame { height: 288px; }
  .nav .frame { height: 199px; }
  .rows { width: 65px; background: linear-gradient(#fff 24px, #c8c8c8 24px); }
  .mrow { display: grid; grid-template-columns: 26px 17px 19px; gap: 1px; height: 19px; margin-bottom: 1px; font: 700 11px var(--tahoma); letter-spacing: -.9px; }
  .mrow span { background: #a3c5a0; display: grid; place-items: center; color: #e00; }
  .mrow span.up { color: #00f; }
  .mrow span:first-child { justify-items: start; padding-left: 4px; }
  .mrow.hot span { background: #72ab70; }
  .mrow.soft span { background: #c4dcc3; }
  .mrow.head { height: 23px; font: 12px var(--ui); background: #e4e4e4; letter-spacing: 0; }
  .mrow.head span { background: #fff; color: #000; }
  .mrow.head span:first-child { padding-left: 6px; }
  .sbar { width: 15px; background: #f0f0f0; margin-left: auto; display: flex; flex-direction: column; align-items: center; padding: 7px 0; }
  .t-up { border: 3.5px solid transparent; border-bottom: 4px solid #444; border-top: 0; }
  .t-dn { border: 3.5px solid transparent; border-top: 4px solid #444; border-bottom: 0; margin-top: auto; }
  .thumb { width: 14px; border: 1px solid #979797; border-radius: 1px; background: linear-gradient(90deg, #f5f5f5, #d0d0d4); }
  .small { height: 15px; margin-top: 7px; }
  .big { height: 70px; margin-top: 42px; background: repeating-linear-gradient(#666 0 1px, transparent 1px 3px) 3px 29px / 7px 8px no-repeat, linear-gradient(90deg, #f5f5f5, #c8c8cc); }
  .nav .frame .sbar { margin-right: 1px; }
  .ptabs { display: flex; width: 82px; height: 21px; padding-left: 3px; background: linear-gradient(#000, #000) 0 0 / 100% 1px no-repeat; overflow: hidden; }
  .ptabs b { font-weight: 400; background: #fff; border: 1px solid #000; border-top: 0; border-bottom-width: 1.5px; padding: 4px 10px 0; letter-spacing: -.1px; }
  .ptabs span { padding: 4px 0 0 9px; color: #666; }
  .mw .ptabs b { width: 74px; padding-left: 9px; }
  .nav .ptabs b { width: 61px; padding-left: 9px; }

  .tree { position: relative; width: 65px; overflow: hidden; }
  .lines { position: absolute; left: 0; top: 0; }
  .node { position: relative; height: 18px; display: flex; align-items: center; font-size: 12px; }
  .l1 { padding-left: 9px; }
  .l1 .pm { margin-right: 8px; }
  .l1 span { margin-left: 5px; }
  .l1 .tight { font-size: 10.5px; letter-spacing: -1px; margin-left: 4px; }
  .l2 { padding-left: 30px; }
  .l2 .pm { margin-right: 8px; }
  .l3 { padding-left: 51px; }
  .leaf { padding-left: 47px; }
  .pm { width: 9px; height: 9px; flex: none; border: 1px solid #8a97a6; background: linear-gradient(#224488, #224488) center / 5px 1px no-repeat, #fff; }
  .pm.plus { background: linear-gradient(#224488, #224488) center / 5px 1px no-repeat, linear-gradient(#224488, #224488) center / 1px 5px no-repeat, #fff; }

  .work { flex: 1; display: flex; flex-direction: column; }
  .chart { height: 551px; position: relative; border-left: 2px solid #555; border-top: 1px solid #696969; background: #000; margin-right: 2px; }
  .lbl text { font: 9.5px var(--tahoma); }
  .quotes { position: absolute; top: 20px; width: 349px; font: 9.5px/1 var(--arial); }
  .one.quotes { left: 9px; }
  .two.quotes { left: 369px; }
  .qrow { display: grid; grid-template-columns: 32px 28px 52px 28px 56px 56px 12px 12px 31px 33px; gap: 1px; grid-template-rows: 14px; margin-bottom: 1px; }
  .qrow.extra { margin-top: 2px; }
  .c { background: #f0f0f0; }
  .first { background: #f5f5f5; text-align: center; padding-top: 1px; }
  .sum { font-size: 13px; color: #999; text-align: right; padding: 2px 7px 0 0; }
  .chk { display: flex; background: #b0e0e6; align-items: center; }
  .chk b { flex: 1; text-align: center; font: 12px/14px var(--arial); color: #dc1e32; padding-left: 1px; }
  .box { width: 13px; height: 13px; background: #fff; border: 1px solid #808080; border-right-color: #e8e8e8; border-bottom-color: #e8e8e8; box-shadow: inset 1px 1px #606060; }
  .chk .box { margin-bottom: 1px; }
  .quotes button { height: 14px; border: 1px solid; border-color: #fff #606060 #606060 #fff; box-shadow: inset -1px -1px #a0a0a0; line-height: 11px; overflow: hidden; padding-bottom: 1px; }
  .pair { background: #e6e6fa; color: #000080; }
  .quotes .pair { font-size: 10.4px; letter-spacing: -.35px; }
  .be { background: #c0ffc0; }
  .cl { background: #ffdcaa; }
  .quotes .be { font-size: 10px; }
  .quotes .cl { font-size: 10px; margin-left: 1px; }

  .panel { position: absolute; left: 768px; top: 25px; width: 160px; display: flex; flex-direction: column; gap: 1px; font: 13px/18px var(--arial); }
  .phead { height: 20px; background: #4682b4; color: #e3ecf5; padding-left: 8px; line-height: 17px; letter-spacing: -.1px; }
  .prow { height: 20px; background: #f5f5f5; padding-left: 4px; display: flex; }
  .prow em { font-style: normal; margin-left: 20px; }
  .brown { color: #a52a2a; }
  .green { color: #008000; }
  .forest { color: #228b22; }
  .blue { color: #00f; }
  .navy { height: 21px; background: #191970; margin-bottom: -1px; }
  .switch { height: 20px; display: flex; color: #fff; line-height: 20px; }
  .switch .box { margin-top: 3px; }
  .switch span { margin-left: 21px; }
  .purple { background: #800080; }
  .steel { background: #4682b4; }
  .acts { display: flex; height: 30px; }
  .acts button { width: 80px; color: #fff; border: 2px solid; border-color: #f0f0f0 #888 #888 #f0f0f0; font-size: 13.3px; }
  .acts .go { background: #008000; }
  .acts .stop { background: #f00; }

  .ctabs { height: 19px; margin-left: 1px; padding-left: 5px; display: flex; margin-top: 1px; background: linear-gradient(#000, #000) 0 0 / 100% 1px no-repeat; color: #6d6d6d; }
  .ctabs span, .ttabs span { display: flex; align-items: center; justify-content: center; flex: none; position: relative; letter-spacing: -.35px; white-space: nowrap; }
  .ctabs span { padding: 1px 1px 0 0; }
  .ctabs span:not(.sel)::after, .ttabs span:not(.sel)::after { content: ''; position: absolute; right: 0; top: 4px; width: 1px; height: 13px; background: #6d6d6d; }
  .ttabs span { padding-right: 2px; }
  .ctabs .sel, .ttabs .sel { background: #fff; color: #000; border: 1px solid #000; border-top: 0; border-bottom-width: 2px; }
  .ctabs .sel { padding-top: 2px; }
  .nudge { margin-left: auto; display: flex; gap: 16px; padding: 5px 9px 0 0; }
  .nudge i { border: 4px solid transparent; height: 8px; border-left: 0; border-right-color: #888; }
  .nudge i + i { border-left: 4px solid #888; border-right: 0; }

  .terminal { height: 36px; display: flex; border-top: 1px solid #fff; border-bottom: 1px solid #a0a0a0; }
  .tside { width: 15px; padding: 6px 0 0 3px; }
  .tside span { writing-mode: vertical-rl; transform: rotate(180deg); display: block; height: 16px; width: 12px; margin: 4px 0 0 -2px; background: #b9cbe0; color: #3c4c5c; font-size: 11px; }
  .tbody { flex: 1; border-left: 1px solid #a0a0a0; border-top: 1px solid #a0a0a0; margin: 4px 3px 0 0; background: linear-gradient(#fff 5px, #f0f0f0 5px); padding-top: 5px; }
  .ttabs { height: 21px; display: flex; padding-left: 2px; color: #6d6d6d; background: linear-gradient(#000, #000) 0 0 / 100% 1px no-repeat; }
  .ttabs b { color: #f00; font: 700 9px var(--tahoma); margin: 8px 0 0 2px; letter-spacing: -.6px; }

  .status { height: 24px; display: flex; align-items: center; border-top: 1px solid #fff; letter-spacing: -.42px; white-space: nowrap; }
  .help { width: 673px; padding: 2px 0 0 3px; }
  .cell { height: 18px; line-height: 19px; border-left: 1px solid #a0a0a0; padding-left: 5px; margin-left: -1px; margin-right: 1px; }
  .net { display: flex; align-items: center; gap: 2px; }

  .taskbar {
    height: 40px; display: flex; border-top: 1px solid #5c6f84;
    background: linear-gradient(90deg, #7990aa 0, #92abc6 4%, #b3cfec 9%, #a9c5e2 20%, #b3cee9 30%, #abc7e3 45%, #b2cdea 55%, #a6c1dc 63%, #aecae6 70%, #95aec8 75%, #7e95ae 82%, #8297b0 92%, #8fa6c0);
  }
  .start { width: 58px; padding: 0 0 0 8px; }
  .task { width: 62px; display: flex; justify-content: center; }
  .tb { width: 58px; height: 39px; display: grid; place-items: center; }
  .open { border: 1px solid #516274; border-radius: 3px; box-shadow: inset 0 0 0 1px #e5f0fa; background: linear-gradient(160deg, #dbe8f4, #b3cbe2 60%, #c0d5e9); }
  .active { background: linear-gradient(#f4f9fd, #d5e5f3); }
  .tray { display: flex; align-items: center; color: #fff; margin-left: 243px; gap: 8.6px; width: 230px; padding-left: 2px; }
  .tray .lang { font: 11.5px var(--arial); color: #eef3f8; margin: -5px -3px 0 0; }
  .tray .q, .tray .lift { margin-top: -6px; }
  .time { width: 75px; display: flex; flex-direction: column; align-items: center; gap: 5px; padding-top: 7px; color: #fff; letter-spacing: -.6px; }
  .peek { width: 14px; margin-left: auto; border: 1px solid #59708a; background: linear-gradient(160deg, #b9cbdd, #7f96b0); }
</style>
